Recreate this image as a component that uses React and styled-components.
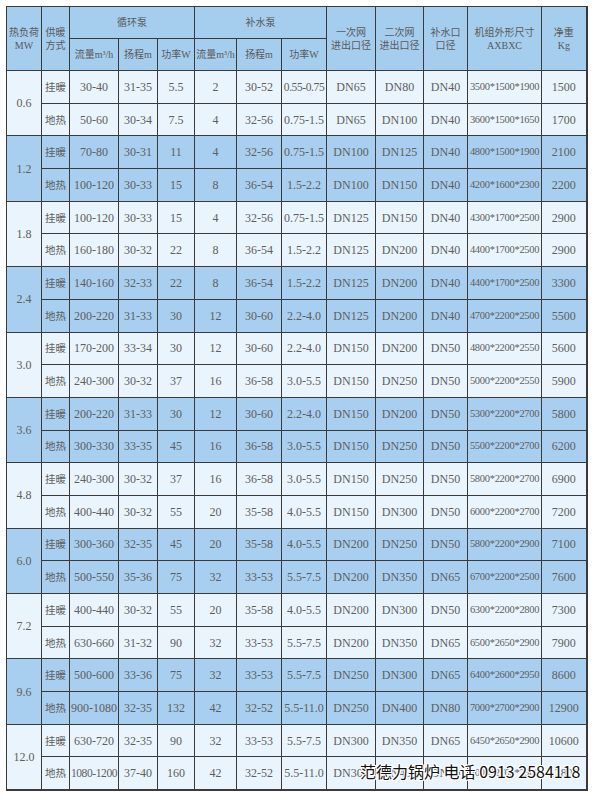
import styled, { createGlobalStyle } from 'styled-components';

const GlobalStyle = createGlobalStyle`
  body {
    margin: 0;
    background: #ffffff;
    font-family: "Liberation Serif", "Noto Sans CJK SC", serif;
  }
`;

const widths = [35, 28, 49, 39, 37, 42, 45, 45, 49, 48, 44, 74, 45];

const groups = [
  ['0.6', [
    ['挂暖', '30-40', '31-35', '5.5', '2', '30-52', '0.55-0.75', 'DN65', 'DN80', 'DN40', '3500*1500*1900', '1500'],
    ['地热', '50-60', '30-34', '7.5', '4', '32-56', '0.75-1.5', 'DN65', 'DN100', 'DN40', '3600*1500*1650', '1700'],
  ]],
  ['1.2', [
    ['挂暖', '70-80', '30-31', '11', '4', '32-56', '0.75-1.5', 'DN100', 'DN125', 'DN40', '4800*1500*1900', '2100'],
    ['地热', '100-120', '30-33', '15', '8', '36-54', '1.5-2.2', 'DN100', 'DN150', 'DN40', '4200*1600*2300', '2200'],
  ]],
  ['1.8', [
    ['挂暖', '100-120', '30-33', '15', '4', '32-56', '0.75-1.5', 'DN125', 'DN150', 'DN40', '4300*1700*2500', '2900'],
    ['地热', '160-180', '30-32', '22', '8', '36-54', '1.5-2.2', 'DN125', 'DN200', 'DN40', '4400*1700*2500', '2900'],
  ]],
  ['2.4', [
    ['挂暖', '140-160', '32-33', '22', '8', '36-54', '1.5-2.2', 'DN125', 'DN200', 'DN40', '4400*1700*2500', '3300'],
    ['地热', '200-220', '31-33', '30', '12', '30-60', '2.2-4.0', 'DN125', 'DN200', 'DN40', '4700*2200*2500', '5500'],
  ]],
  ['3.0', [
    ['挂暖', '170-200', '33-34', '30', '12', '30-60', '2.2-4.0', 'DN150', 'DN200', 'DN50', '4800*2200*2550', '5600'],
    ['地热', '240-300', '30-32', '37', '16', '36-58', '3.0-5.5', 'DN150', 'DN250', 'DN50', '5000*2200*2550', '5900'],
  ]],
  ['3.6', [
    ['挂暖', '200-220', '31-33', '30', '12', '30-60', '2.2-4.0', 'DN150', 'DN200', 'DN50', '5300*2200*2700', '5800'],
    ['地热', '300-330', '33-35', '45', '16', '36-58', '3.0-5.5', 'DN150', 'DN250', 'DN50', '5500*2200*2700', '6200'],
  ]],
  ['4.8', [
    ['挂暖', '240-300', '30-32', '37', '16', '36-58', '3.0-5.5', 'DN150', 'DN250', 'DN50', '5800*2200*2700', '6900'],
    ['地热', '400-440', '30-32', '55', '20', '35-58', '4.0-5.5', 'DN150', 'DN300', 'DN50', '6000*2200*2700', '7200'],
  ]],
  ['6.0', [
    ['挂暖', '300-360', '32-35', '45', '20', '35-58', '4.0-5.5', 'DN200', 'DN250', 'DN50', '5800*2200*2900', '7100'],
    ['地热', '500-550', '35-36', '75', '32', '33-53', '5.5-7.5', 'DN200', 'DN350', 'DN65', '6700*2200*2500', '7600'],
  ]],
  ['7.2', [
    ['挂暖', '400-440', '30-32', '55', '20', '35-58', '4.0-5.5', 'DN200', 'DN300', 'DN50', '6300*2200*2800', '7300'],
    ['地热', '630-660', '31-32', '90', '32', '33-53', '5.5-7.5', 'DN200', 'DN350', 'DN65', '6500*2650*2900', '7900'],
  ]],
  ['9.6', [
    ['挂暖', '500-600', '33-36', '75', '32', '33-53', '5.5-7.5', 'DN250', 'DN300', 'DN65', '6400*2600*2950', '8600'],
    ['地热', '900-1080', '32-35', '132', '42', '32-52', '5.5-11.0', 'DN250', 'DN400', 'DN80', '7000*2700*2900', '12900'],
  ]],
  ['12.0', [
    ['挂暖', '630-720', '32-35', '90', '32', '33-53', '5.5-7.5', 'DN300', 'DN350', 'DN65', '6450*2650*2900', '10600'],
    ['地热', '1080-1200', '37-40', '160', '42', '32-52', '5.5-11.0', 'DN300', 'DN450', 'DN80', '7000*2700*2900', '13800'],
  ]],
];

const cellKind = (c, ci) => {
  if (ci === 0) return 'cjk';
  if (ci === 10) return 'size';
  if (c.length > 8) return 'long';
  return 'num';
};

function App() {
  return (
    <>
      <GlobalStyle />
      <Page>
        <Table>
          <colgroup>
            {widths.map((w, i) => <col key={i} style={{ width: w }} />)}
          </colgroup>
          <thead>
            <HeadRow>
              <Th rowSpan={2}>热负荷<br />MW</Th>
              <Th rowSpan={2}>供暖<br />方式</Th>
              <Th colSpan={3}>循环泵</Th>
              <Th colSpan={3}>补水泵</Th>
              <Th rowSpan={2}>一次网<br />进出口径</Th>
              <Th rowSpan={2}>二次网<br />进出口径</Th>
              <Th rowSpan={2}>补水口<br />口径</Th>
              <Th rowSpan={2}>机组外形尺寸<br />AXBXC</Th>
              <Th rowSpan={2}>净重<br />Kg</Th>
            </HeadRow>
            <HeadRow>
              <Th>流量m³/h</Th>
              <Th>扬程m</Th>
              <Th>功率W</Th>
              <Th>流量m³/h</Th>
              <Th>扬程m</Th>
              <Th>功率W</Th>
            </HeadRow>
          </thead>
          <tbody>
            {groups.map(([load, rows], gi) =>
              rows.map((cells, ri) => (
                <Row key={`${gi}-${ri}`} $dark={gi % 2 === 1}>
                  {ri === 0 && <Td rowSpan={2} $kind="num">{load}</Td>}
                  {cells.map((c, ci) => (
                    <Td key={ci} $kind={cellKind(c, ci)}>{c}</Td>
                  ))}
                </Row>
              ))
            )}
          </tbody>
        </Table>
        <Watermark>范德力锅炉 电话 0913 2584118</Watermark>
      </Page>
    </>
  );
}

export default App;

const Page = styled.div`
  position: relative;
  width: 593px;
  height: 800px;
  padding: 6px 0 0 6px;
  box-sizing: border-box;
`;

const Table = styled.table`
  border-collapse: collapse;
  table-layout: fixed;
  width: 580px;
  border: 1px solid #3a3a3a;
  border-bottom: 2px solid #3a3a3a;
  border-right: 2px solid #3a3a3a;
`;

const HeadRow = styled.tr`
  height: 32px;
  background: #a5cdee;
`;

const Th = styled.th`
  border: 1px solid #3a3a3a;
  font-weight: normal;
  font-size: 10px;
  line-height: 13px;
  color: #5a5a5a;
  padding: 0;
  text-align: center;
  vertical-align: middle;
  font-family: "Liberation Serif", "Noto Sans CJK SC", serif;
  white-space: nowrap;
`;

const Row = styled.tr`
  height: 32.7px;
  background: ${(p) => (p.$dark ? '#a8cfef' : '#eaf4fc')};
`;

const sizes = { cjk: '10.5px', size: '10.5px', long: '11.5px', num: '12px' };
const spacing = { cjk: '0', size: '-0.3px', long: '-0.4px', num: '0' };

const Td = styled.td`
  border: 1px solid #3a3a3a;
  padding: 0;
  text-align: center;
  vertical-align: middle;
  white-space: nowrap;
  overflow: hidden;
  line-height: 14px;
  color: #5e5e5e;
  font-size: ${(p) => sizes[p.$kind]};
  letter-spacing: ${(p) => spacing[p.$kind]};
  font-family: ${(p) =>
    p.$kind === 'cjk' ? '"Noto Sans CJK SC", sans-serif' : '"Liberation Serif", "DejaVu Serif", serif'};
`;

const Watermark = styled.div`
  position: absolute;
  left: 360px;
  top: 761px;
  font-family: "Noto Sans CJK SC", "DejaVu Sans", sans-serif;
  font-size: 16px;
  line-height: 20px;
  color: #111111;
  white-space: nowrap;
  text-shadow: 1px 0 0 #fff, -1px 0 0 #fff, 0 1px 0 #fff, 0 -1px 0 #fff, 1px 1px 0 #fff, -1px -1px 0 #fff, 1px -1px 0 #fff, -1px 1px 0 #fff;
`;
